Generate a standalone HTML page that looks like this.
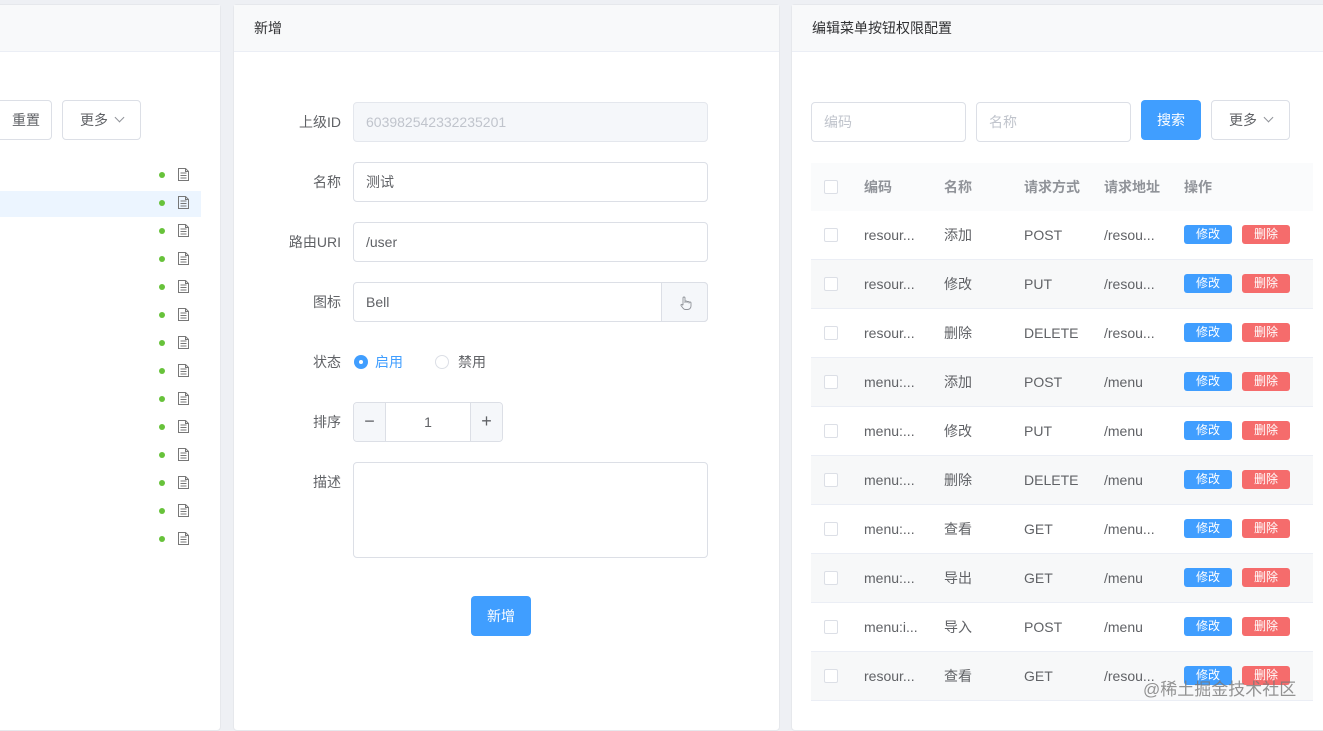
<!DOCTYPE html>
<html><head><meta charset="utf-8"><style>
*{box-sizing:border-box;margin:0;padding:0}
body{width:1323px;height:721px;overflow:hidden;background:#eef0f4;font-family:"Liberation Sans","Noto Sans CJK SC",sans-serif;font-size:14px;color:#606266;position:relative}
.a{position:absolute}
.panel{position:absolute;top:4px;bottom:-10px;background:#fff;border:1px solid #e6e8ec;border-radius:4px}
.hd{position:absolute;left:0;right:0;top:0;height:47px;background:#f8f9fa;border-bottom:1px solid #ebeef5;line-height:46px;padding-left:20px;color:#303133;font-size:14px}
.inp{position:absolute;border:1px solid #dcdfe6;border-radius:4px;height:40px;line-height:38px;padding-left:12px;background:#fff}
.lbl{position:absolute;width:100px;text-align:right;line-height:40px;color:#606266}
.btn{position:absolute;border:1px solid #dcdfe6;border-radius:4px;background:#fff;text-align:center;line-height:38px;height:40px}
.chev{display:inline-block;width:7px;height:7px;border-right:1px solid #909399;border-bottom:1px solid #909399;transform:rotate(45deg);margin-left:8px;position:relative;top:-4px}
.dot{position:absolute;width:6px;height:6px;border-radius:50%;background:#67c23a}
.cb{position:absolute;width:14px;height:14px;border:1px solid #dcdfe6;border-radius:2px;background:#fff}
.sb{position:absolute;width:48px;height:19px;border-radius:3px;color:#fff;font-size:12px;text-align:center;line-height:19px}
</style></head><body>

<div class="panel" style="left:-10px;width:231px">
  <div class="hd"></div>
</div>
<div class="btn a" style="left:-10px;top:100px;width:62px;padding-left:10px">重置</div>
<div class="btn a" style="left:62px;top:100px;width:79px">更多<span class="chev"></span></div>
<div class="a" style="left:0;top:191px;width:201px;height:26px;background:#ecf5ff"></div>
<div id="tree"></div>

<div class="panel" style="left:233px;width:547px">
  <div class="hd">新增</div>
</div>
<div class="lbl" style="left:241px;top:102px">上级ID</div>
<div class="inp" style="left:353px;top:102px;width:355px;background:#f5f7fa;border-color:#e4e7ed;color:#c0c4cc">603982542332235201</div>
<div class="lbl" style="left:241px;top:162px">名称</div>
<div class="inp" style="left:353px;top:162px;width:355px">测试</div>
<div class="lbl" style="left:241px;top:222px">路由URI</div>
<div class="inp" style="left:353px;top:222px;width:355px">/user</div>
<div class="lbl" style="left:241px;top:282px">图标</div>
<div class="inp" style="left:353px;top:282px;width:355px">Bell</div>
<div class="a" style="left:661px;top:282px;width:47px;height:40px;background:#f5f7fa;border:1px solid #dcdfe6;border-radius:0 4px 4px 0">
<svg width="47" height="40" viewBox="0 0 47 40"><path d="M21 22V15a1 1 0 0 1 2 0v5m0-1a1 1 0 0 1 2 0v1m0-0.5a1 1 0 0 1 2 0v1m0-0.5a1 1 0 0 1 2 0v3c0 2-1.5 3.5-3.5 3.5h-2c-1.2 0-2-0.6-2.6-1.5L19 22.5c-0.4-0.8 0.6-1.5 1.2-0.9l0.8 0.9" fill="none" stroke="#909399" stroke-width="0.9"/></svg></div>
<div class="lbl" style="left:241px;top:342px">状态</div>
<div class="a" style="left:354px;top:355px;width:14px;height:14px;border-radius:50%;background:#409eff"><div class="a" style="left:5px;top:5px;width:4px;height:4px;border-radius:50%;background:#fff"></div></div>
<div class="a" style="left:375px;top:352px;color:#409eff;line-height:20px">启用</div>
<div class="a" style="left:435px;top:355px;width:14px;height:14px;border-radius:50%;border:1px solid #dcdfe6"></div>
<div class="a" style="left:458px;top:352px;line-height:20px">禁用</div>
<div class="lbl" style="left:241px;top:402px">排序</div>
<div class="inp" style="left:353px;top:402px;width:150px;padding:0;text-align:center">1</div>
<div class="a" style="left:354px;top:403px;width:32px;height:38px;background:#f5f7fa;border-right:1px solid #dcdfe6;border-radius:4px 0 0 4px;text-align:center;line-height:36px;font-size:18px;color:#606266">−</div>
<div class="a" style="left:470px;top:403px;width:32px;height:38px;background:#f5f7fa;border-left:1px solid #dcdfe6;border-radius:0 4px 4px 0;text-align:center;line-height:36px;font-size:18px;color:#606266">+</div>
<div class="lbl" style="left:241px;top:462px">描述</div>
<div class="inp" style="left:353px;top:462px;width:355px;height:96px"></div>
<div class="a" style="left:471px;top:596px;width:60px;height:40px;background:#409eff;border-radius:4px;color:#fff;text-align:center;line-height:40px">新增</div>

<div class="panel" style="left:791px;width:545px">
  <div class="hd">编辑菜单按钮权限配置</div>
</div>
<div class="inp" style="left:811px;top:102px;width:155px;color:#c0c4cc">编码</div>
<div class="inp" style="left:976px;top:102px;width:155px;color:#c0c4cc">名称</div>
<div class="a" style="left:1141px;top:100px;width:60px;height:40px;background:#409eff;border-radius:4px;color:#fff;text-align:center;line-height:40px">搜索</div>
<div class="btn a" style="left:1211px;top:100px;width:79px">更多<span class="chev"></span></div>
<div class="a" style="left:811px;top:163px;width:502px;height:48px;background:#fafbfc"></div>
<div class="cb" style="left:824px;top:180px"></div>
<div class="a" style="left:864px;top:177px;color:#909399;font-weight:bold;line-height:20px">编码</div>
<div class="a" style="left:944px;top:177px;color:#909399;font-weight:bold;line-height:20px">名称</div>
<div class="a" style="left:1024px;top:177px;color:#909399;font-weight:bold;line-height:20px">请求方式</div>
<div class="a" style="left:1104px;top:177px;color:#909399;font-weight:bold;line-height:20px">请求地址</div>
<div class="a" style="left:1184px;top:177px;color:#909399;font-weight:bold;line-height:20px">操作</div>
<div id="rows"></div>
<div class="a" style="left:1143px;top:678px;font-size:17px;color:rgba(120,120,120,0.8);line-height:24px">@稀土掘金技术社区</div>

<script>
var t='';
for(var i=0;i<14;i++){var y=175+28*i;
t+='<div class="dot" style="left:159px;top:'+(y-3)+'px"></div>';
t+='<svg class="a" style="left:178px;top:'+(y-7)+'px" width="11" height="13" viewBox="0 0 11 13"><path d="M0.5 0.5h7l3 3v9h-10z M7.5 0.5v3h3 M2.5 5h6 M2.5 7.5h6 M2.5 10h6" fill="none" stroke="#777" stroke-width="1"/></svg>';}
document.getElementById('tree').innerHTML=t;
var d=[["resour...","添加","POST","/resou..."],["resour...","修改","PUT","/resou..."],["resour...","删除","DELETE","/resou..."],["menu:...","添加","POST","/menu"],["menu:...","修改","PUT","/menu"],["menu:...","删除","DELETE","/menu"],["menu:...","查看","GET","/menu..."],["menu:...","导出","GET","/menu"],["menu:i...","导入","POST","/menu"],["resour...","查看","GET","/resou..."]];
var h='';
for(var i=0;i<d.length;i++){var y=211+49*i;
h+='<div class="a" style="left:811px;top:'+y+'px;width:502px;height:49px;border-bottom:1px solid #ebeef5;background:'+(i%2?'#f7f8f9':'#fff')+'"></div>';
h+='<div class="cb" style="left:824px;top:'+(y+17)+'px"></div>';
var xs=[864,944,1024,1104];
for(var j=0;j<4;j++)h+='<div class="a" style="left:'+xs[j]+'px;top:'+(y+14)+'px;line-height:20px">'+d[i][j]+'</div>';
h+='<div class="sb" style="left:1184px;top:'+(y+14)+'px;background:#409eff">修改</div>';
h+='<div class="sb" style="left:1242px;top:'+(y+14)+'px;background:#f56c6c">删除</div>';}
document.getElementById('rows').innerHTML=h;
</script>
</body></html>
